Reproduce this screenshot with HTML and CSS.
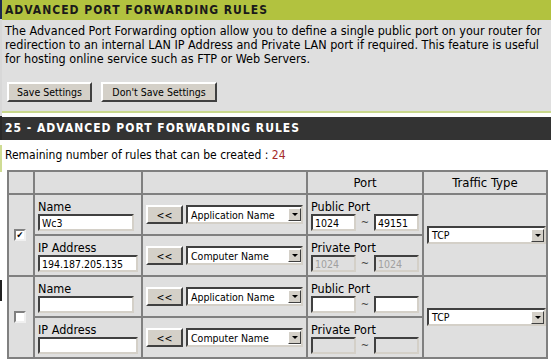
FILE: index.html
```html
<!DOCTYPE html>
<html>
<head>
    <title>Advanced Port Forwarding</title>
    <link rel="stylesheet" href="styles.css">
</head>
<body>
    <div class="page">
        <div class="box">
            <h1 class="box-title">ADVANCED PORT FORWARDING RULES</h1>
            <p class="intro">The Advanced Port Forwarding option allow you to define a single public port on your router for redirection to an internal LAN IP Address and Private LAN port if required. This feature is useful for hosting online service such as FTP or Web Servers.</p>
            <div class="actions">
                <button class="btn save">Save Settings</button>
                <button class="btn nosave">Don't Save Settings</button>
            </div>
        </div>

        <div class="rules-box">
            <h2 class="bar">25 - ADVANCED PORT FORWARDING RULES</h2>
            <p class="remaining">Remaining number of rules that can be created : <span class="count">24</span></p>

            <table class="rules">
                <tr class="head">
                    <th class="c-check"></th>
                    <th class="c-name"></th>
                    <th class="c-pick"></th>
                    <th class="c-port">Port</th>
                    <th class="c-type">Traffic Type</th>
                </tr>

                <tr>
                    <td class="c-check" rowspan="2"><span class="check">&#10004;</span></td>
                    <td class="c-name">
                        <div class="lbl">Name</div>
                        <input class="txt name" type="text" value="Wc3">
                    </td>
                    <td class="c-pick">
                        <div class="pick">
                            <button class="btn small">&lt;&lt;</button>
                            <div class="combo app"><span class="combo-text">Application Name</span><span class="combo-btn"><i class="arrow"></i></span></div>
                        </div>
                    </td>
                    <td class="c-port">
                        <div class="lbl">Public Port</div>
                        <div class="range"><input class="txt port" type="text" value="1024"><span class="tilde">~</span><input class="txt port" type="text" value="49151"></div>
                    </td>
                    <td class="c-type" rowspan="2">
                        <div class="combo type"><span class="combo-text">TCP</span><span class="combo-btn"><i class="arrow"></i></span></div>
                    </td>
                </tr>
                <tr>
                    <td class="c-name">
                        <div class="lbl">IP Address</div>
                        <input class="txt ip" type="text" value="194.187.205.135">
                    </td>
                    <td class="c-pick">
                        <div class="pick">
                            <button class="btn small">&lt;&lt;</button>
                            <div class="combo app"><span class="combo-text">Computer Name</span><span class="combo-btn"><i class="arrow"></i></span></div>
                        </div>
                    </td>
                    <td class="c-port">
                        <div class="lbl">Private Port</div>
                        <div class="range"><input class="txt port off" type="text" value="1024" disabled><span class="tilde">~</span><input class="txt port off" type="text" value="1024" disabled></div>
                    </td>
                </tr>

                <tr>
                    <td class="c-check" rowspan="2"><span class="check"></span></td>
                    <td class="c-name">
                        <div class="lbl">Name</div>
                        <input class="txt name" type="text" value="">
                    </td>
                    <td class="c-pick">
                        <div class="pick">
                            <button class="btn small">&lt;&lt;</button>
                            <div class="combo app"><span class="combo-text">Application Name</span><span class="combo-btn"><i class="arrow"></i></span></div>
                        </div>
                    </td>
                    <td class="c-port">
                        <div class="lbl">Public Port</div>
                        <div class="range"><input class="txt port" type="text" value=""><span class="tilde">~</span><input class="txt port" type="text" value=""></div>
                    </td>
                    <td class="c-type" rowspan="2">
                        <div class="combo type"><span class="combo-text">TCP</span><span class="combo-btn"><i class="arrow"></i></span></div>
                    </td>
                </tr>
                <tr>
                    <td class="c-name">
                        <div class="lbl">IP Address</div>
                        <input class="txt ip" type="text" value="">
                    </td>
                    <td class="c-pick">
                        <div class="pick">
                            <button class="btn small">&lt;&lt;</button>
                            <div class="combo app"><span class="combo-text">Computer Name</span><span class="combo-btn"><i class="arrow"></i></span></div>
                        </div>
                    </td>
                    <td class="c-port">
                        <div class="lbl">Private Port</div>
                        <div class="range"><input class="txt port off" type="text" value="" disabled><span class="tilde">~</span><input class="txt port off" type="text" value="" disabled></div>
                    </td>
                </tr>
            </table>
        </div>
    </div>
</body>
</html>
```

FILE: styles.css
```css
body {
    margin: 0;
    background: #ffffff;
    font-family: "DejaVu Sans Condensed", "DejaVu Sans", sans-serif;
    font-size: 12px;
    color: #000000;
    overflow: hidden;
}

/* thin strip left over from the frame next to this one */
.page {
    border-left: 2px solid;
    border-image: linear-gradient(to bottom,
        #1e2a50 0, #1e2a50 20px,
        #d8d8d8 20px, #d8d8d8 116px,
        #2a2a2a 116px, #2a2a2a 140px,
        #ffffff 140px, #ffffff 145px,
        #cfdc94 145px, #cfdc94 172px,
        #ffffff 172px, #ffffff 279px,
        #222222 279px, #222222 300px,
        #ffffff 300px) 1;
    min-height: 359px;
}

.box {
    background: #dfdfdf;
    border-bottom: 2px solid #c9d88c;
    padding-bottom: 9px;
}

.box-title {
    margin: 0;
    height: 20px;
    line-height: 20px;
    padding-left: 3px;
    background: #b2c23f;
    color: #1a1a1a;
    font-size: 12px;
    font-weight: bold;
    letter-spacing: 1px;
}

.intro {
    margin: 0;
    padding: 4px 0 0 3px;
    font-size: 12.5px;
    line-height: 14px;
}

.actions {
    margin-top: 16px;
    padding-left: 5px;
    display: flex;
    gap: 9px;
}

.btn {
    font-family: inherit;
    font-size: 10.5px;
    background: #d4d0c8;
    color: #000000;
    border: 2px solid;
    border-color: #ffffff #404040 #404040 #ffffff;
    height: 20px;
    padding: 0;
}

.btn.save { width: 85px; }
.btn.nosave { width: 116px; }

.rules-box {
    margin-top: 4px;
}

.bar {
    margin: 0;
    height: 23px;
    line-height: 23px;
    padding-left: 3px;
    background: #333333;
    color: #ffffff;
    font-size: 12px;
    font-weight: bold;
    letter-spacing: 1px;
}

.remaining {
    margin: 0;
    padding: 8px 3px 0 3px;
    height: 30px;
    box-sizing: border-box;
    font-size: 12px;
}

.count {
    color: #a52a2a;
}

.rules {
    margin-left: 5px;
    width: 541px;
    table-layout: fixed;
    border-collapse: separate;
    border-spacing: 0;
    border-top: 2px solid #808080;
    border-left: 2px solid #808080;
}

.rules th,
.rules td {
    box-sizing: border-box;
    background: #dfdfdf;
    border-right: 2px solid #808080;
    border-bottom: 2px solid #808080;
    padding: 0 3px;
    font-weight: normal;
}

.rules th {
    height: 23px;
    text-align: center;
    font-size: 13px;
}

.rules td {
    height: 41px;
    vertical-align: bottom;
    padding-bottom: 3px;
}

.rules td.c-pick,
.rules td.c-type,
.rules td.c-check {
    vertical-align: middle;
    padding-bottom: 0;
}

.c-check { width: 26px; text-align: center; }
.c-name { width: 108px; }
.c-pick { width: 165px; }
.c-port { width: 116px; }
.c-type { width: 124px; }

.rules td.c-check { padding: 0 0 0 5px; text-align: left; }

.lbl {
    font-size: 12.5px;
    line-height: 14px;
}

.txt {
    display: block;
    font-family: inherit;
    font-size: 10.5px;
    height: 17px;
    box-sizing: border-box;
    padding: 0 2px;
    border: 2px solid;
    border-color: #404040 #d4d0c8 #d4d0c8 #404040;
    background: #ffffff;
    margin: 0;
}

.txt.name { width: 96px; }
.txt.ip { width: 100px; }
.txt.port { width: 45px; }

.txt.off {
    background: #dfdfdf;
    color: #a0a0a0;
}

.range {
    display: flex;
    align-items: center;
}

.tilde {
    width: 18px;
    text-align: center;
    color: #444444;
    font-size: 11px;
}

.pick {
    display: flex;
    align-items: center;
    gap: 3px;
}

.btn.small {
    width: 37px;
    height: 19px;
}

.combo {
    display: flex;
    align-items: center;
    box-sizing: border-box;
    height: 19px;
    font-size: 10.5px;
    border: 2px solid;
    border-color: #404040 #d4d0c8 #d4d0c8 #404040;
    background: #ffffff;
}

.combo.app { width: 117px; }
.combo.type { width: 119px; height: 18px; }

.combo-text {
    flex: 1;
    padding-left: 3px;
}

.combo-btn {
    width: 13px;
    height: 13px;
    box-sizing: border-box;
    margin-right: 0;
    background: #d4d0c8;
    border: 1px solid;
    border-color: #ffffff #404040 #404040 #ffffff;
    display: flex;
    align-items: center;
    justify-content: center;
}

.arrow {
    width: 0;
    height: 0;
    border-left: 3px solid transparent;
    border-right: 3px solid transparent;
    border-top: 3px solid #000000;
}

.check {
    display: block;
    width: 12px;
    height: 12px;
    box-sizing: border-box;
    border: 2px solid;
    border-color: #808080 #f0f0f0 #f0f0f0 #808080;
    background: #ffffff;
    color: #000000;
    font-size: 9px;
    font-weight: bold;
    line-height: 8px;
    text-align: center;
    overflow: hidden;
}
```
